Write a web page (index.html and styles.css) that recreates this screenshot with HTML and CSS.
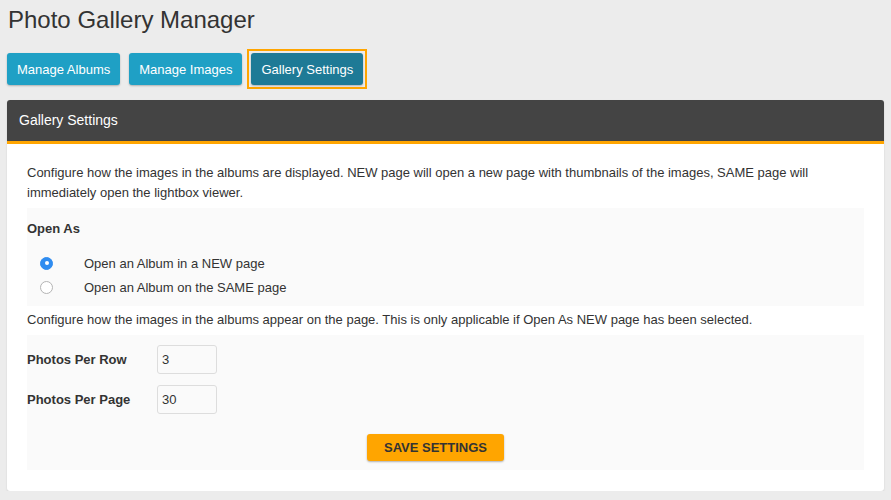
FILE: index.html
```html
<!DOCTYPE html>
<html>
<head>
<meta charset="utf-8">
<link rel="stylesheet" href="styles.css">
</head>
<body>
<div class="wrap">
  <h1 class="title">Photo Gallery Manager</h1>
  <div class="tabs">
    <button class="tab">Manage Albums</button>
    <button class="tab">Manage Images</button>
    <button class="tab active">Gallery Settings</button>
  </div>
  <div class="panel">
    <div class="panel-head">Gallery Settings</div>
    <div class="panel-body">
      <p class="desc">Configure how the images in the albums are displayed. NEW page will open a new page with thumbnails of the images, SAME page will immediately open the lightbox viewer.</p>
      <div class="section sec-open">
        <div class="sec-label">Open As</div>
        <label class="radio-row"><span class="radio checked"></span><span>Open an Album in a NEW page</span></label>
        <label class="radio-row"><span class="radio"></span><span>Open an Album on the SAME page</span></label>
      </div>
      <p class="desc desc2">Configure how the images in the albums appear on the page. This is only applicable if Open As NEW page has been selected.</p>
      <div class="section sec-photos">
        <div class="field-row"><span class="field-label">Photos Per Row</span><span class="input">3</span></div>
        <div class="field-row"><span class="field-label">Photos Per Page</span><span class="input">30</span></div>
        <div class="save-row"><button class="save">SAVE SETTINGS</button></div>
      </div>
    </div>
  </div>
</div>
</body>
</html>
```

FILE: styles.css
```css
html, body {
  margin: 0;
  padding: 0;
  background: #ececec;
  font-family: "Liberation Sans", Arial, sans-serif;
  color: #333;
}
.wrap {
  padding: 0 7px;
}
.title {
  margin: 0;
  padding: 6px 0 0 1px;
  height: 38px;
  font-size: 24px;
  font-weight: normal;
  color: #333;
  line-height: 28px;
}
.tabs {
  display: flex;
  gap: 9px;
  padding-top: 9px;
  height: 37px;
}
.tab {
  height: 32px;
  padding: 0 10px;
  border: none;
  border-radius: 3px;
  background: #1fa0c5;
  color: #fff;
  font-family: "Liberation Sans", Arial, sans-serif;
  font-size: 13px;
  box-shadow: 0 1px 2px rgba(0,0,0,0.25);
}
.tab.active {
  background: #1e7a96;
  position: relative;
}
.tab.active::after {
  content: "";
  position: absolute;
  left: -4px;
  top: -4px;
  right: -4px;
  bottom: -4px;
  border: 2px solid #ffa500;
}
.panel {
  margin-top: 10px;
  background: #fff;
  border-radius: 3px;
  box-shadow: 0 1px 2px rgba(0,0,0,0.12);
}
.panel-head {
  background: #444;
  color: #fff;
  font-size: 14px;
  height: 41px;
  line-height: 41px;
  padding-left: 12px;
  border-radius: 3px 3px 0 0;
  border-bottom: 3px solid #ffa500;
}
.panel-body {
  padding: 19px 20px 21px;
}
.desc {
  margin: 0;
  font-size: 13px;
  line-height: 20px;
  color: #333;
}
.section {
  background: #fafafa;
}
.sec-open {
  margin-top: 5px;
  padding-top: 12px;
  height: 86px;
}
.sec-label {
  font-weight: bold;
  font-size: 13px;
  line-height: 18px;
  padding-bottom: 13px;
}
.radio-row {
  display: flex;
  align-items: center;
  height: 24px;
  font-size: 13px;
}
.radio {
  width: 13px;
  height: 13px;
  margin-left: 13px;
  margin-right: 31px;
  border-radius: 50%;
  border: 1px solid #b4b4b4;
  box-sizing: border-box;
  background: #fff;
  position: relative;
}
.radio.checked {
  background: #2f8cf0;
  border-color: #2f8cf0;
}
.radio.checked::after {
  content: "";
  position: absolute;
  left: 3.5px;
  top: 3.5px;
  width: 4px;
  height: 4px;
  border-radius: 50%;
  background: #fff;
}
.desc2 {
  padding-top: 4px;
  height: 25px;
}
.sec-photos {
  margin-top: 0;
  padding-top: 10px;
  height: 125px;
}
.field-row {
  display: flex;
  align-items: center;
  height: 29px;
  margin-bottom: 11px;
}
.field-label {
  width: 130px;
  font-weight: bold;
  font-size: 13px;
}
.input {
  width: 60px;
  height: 29px;
  box-sizing: border-box;
  border: 1px solid #ddd;
  border-radius: 3px;
  padding-left: 4px;
  font-size: 13px;
  line-height: 27px;
  background: #fafafa;
}
.save-row {
  text-align: center;
  padding-right: 20px;
  padding-top: 9px;
}
.save {
  height: 27px;
  width: 137px;
  border: none;
  border-radius: 3px;
  background: #ffa500;
  color: #333;
  font-family: "Liberation Sans", Arial, sans-serif;
  font-weight: bold;
  font-size: 13px;
  box-shadow: 0 1px 2px rgba(0,0,0,0.3);
}
```
